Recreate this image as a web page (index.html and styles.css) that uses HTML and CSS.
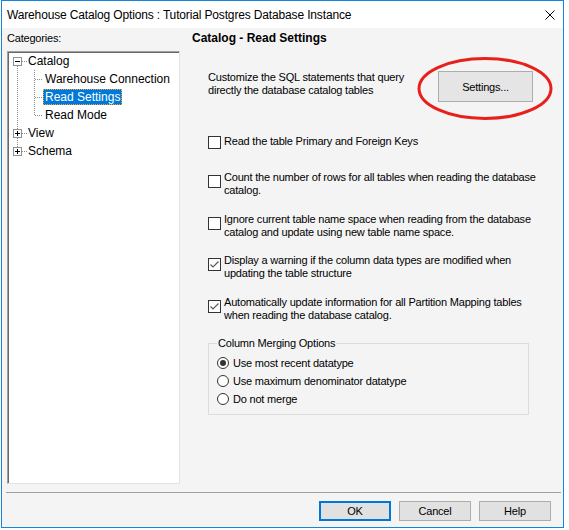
FILE: index.html
```html
<!DOCTYPE html>
<html>
<head>
<meta charset="utf-8">
<link rel="stylesheet" href="styles.css">
</head>
<body>
<div class="window">
  <div class="titlebar">
    <span class="title">Warehouse Catalog Options : Tutorial Postgres Database Instance</span>
    <svg class="close" viewBox="0 0 10 10"><path d="M0.5 0.5 L9.5 9.5 M9.5 0.5 L0.5 9.5" stroke="#000" stroke-width="1" fill="none"/></svg>
  </div>
  <div class="content">
    <div class="main">
      <div class="left">
        <div class="label">Categories:</div>
        <div class="tree">
          <svg class="tree-lines" width="171" height="120">
            <g stroke="#8a8a8a" stroke-width="1" stroke-dasharray="1 1" fill="none">
              <line x1="14" y1="9.5" x2="20" y2="9.5"/>
              <line x1="14" y1="81.5" x2="20" y2="81.5"/>
              <line x1="14" y1="99.5" x2="20" y2="99.5"/>
              <line x1="9.5" y1="14" x2="9.5" y2="77"/>
              <line x1="9.5" y1="86" x2="9.5" y2="95"/>
              <line x1="26.5" y1="18" x2="26.5" y2="64"/>
              <line x1="27" y1="27.5" x2="35" y2="27.5"/>
              <line x1="27" y1="45.5" x2="35" y2="45.5"/>
              <line x1="27" y1="63.5" x2="35" y2="63.5"/>
            </g>
            <g fill="#fff" stroke="#919191">
              <rect x="5.5" y="5.5" width="8" height="8"/>
              <rect x="5.5" y="77.5" width="8" height="8"/>
              <rect x="5.5" y="95.5" width="8" height="8"/>
            </g>
            <g stroke="#000" stroke-width="1">
              <line x1="7" y1="9.5" x2="12" y2="9.5"/>
              <line x1="7" y1="81.5" x2="12" y2="81.5"/>
              <line x1="9.5" y1="79" x2="9.5" y2="84"/>
              <line x1="7" y1="99.5" x2="12" y2="99.5"/>
              <line x1="9.5" y1="97" x2="9.5" y2="102"/>
            </g>
          </svg>
          <div class="node root">Catalog</div>
          <div class="node child">Warehouse Connection</div>
          <div class="node child sel"><span class="selected">Read Settings</span></div>
          <div class="node child">Read Mode</div>
          <div class="node root">View</div>
          <div class="node root">Schema</div>
        </div>
      </div>
      <div class="right">
        <div class="heading">Catalog - Read Settings</div>
        <div class="sql-row">
          <div class="sql-text">Customize the SQL statements that query<br>directly the database catalog tables</div>
          <div class="settings-wrap">
            <button class="btn settings">Settings...</button>
            <svg class="ring" width="139" height="66" viewBox="0 0 139 66"><ellipse cx="69" cy="32.5" rx="66" ry="30" fill="none" stroke="#e8201c" stroke-width="3"/></svg>
          </div>
        </div>
        <div class="checks">
          <div class="cb one">
            <svg class="box" viewBox="0 0 13 13"><rect x="0.5" y="0.5" width="12" height="12" fill="#fff" stroke="#333"/></svg>
            <span>Read the table Primary and Foreign Keys</span>
          </div>
          <div class="cb two second">
            <svg class="box" viewBox="0 0 13 13"><rect x="0.5" y="0.5" width="12" height="12" fill="#fff" stroke="#333"/></svg>
            <span>Count the number of rows for all tables when reading the database<br>catalog.</span>
          </div>
          <div class="cb two">
            <svg class="box" viewBox="0 0 13 13"><rect x="0.5" y="0.5" width="12" height="12" fill="#fff" stroke="#333"/></svg>
            <span>Ignore current table name space when reading from the database<br>catalog and update using new table name space.</span>
          </div>
          <div class="cb two">
            <svg class="box" viewBox="0 0 13 13"><rect x="0.5" y="0.5" width="12" height="12" fill="#fff" stroke="#333"/><path d="M2.5 6.5 L5 9 L10.5 3.5" fill="none" stroke="#5a5a5a" stroke-width="1.2"/></svg>
            <span>Display a warning if the column data types are modified when<br>updating the table structure</span>
          </div>
          <div class="cb two">
            <svg class="box" viewBox="0 0 13 13"><rect x="0.5" y="0.5" width="12" height="12" fill="#fff" stroke="#333"/><path d="M2.5 6.5 L5 9 L10.5 3.5" fill="none" stroke="#5a5a5a" stroke-width="1.2"/></svg>
            <span>Automatically update information for all Partition Mapping tables<br>when reading the database catalog.</span>
          </div>
        </div>
        <fieldset class="group">
          <legend>Column Merging Options</legend>
          <div class="radio">
            <svg class="dot" viewBox="0 0 12 12"><circle cx="6" cy="6" r="5.5" fill="#fff" stroke="#333"/><circle cx="6" cy="6" r="3" fill="#333"/></svg>
            <span>Use most recent datatype</span>
          </div>
          <div class="radio">
            <svg class="dot" viewBox="0 0 12 12"><circle cx="6" cy="6" r="5.5" fill="#fff" stroke="#333"/></svg>
            <span>Use maximum denominator datatype</span>
          </div>
          <div class="radio">
            <svg class="dot" viewBox="0 0 12 12"><circle cx="6" cy="6" r="5.5" fill="#fff" stroke="#333"/></svg>
            <span>Do not merge</span>
          </div>
        </fieldset>
      </div>
    </div>
    <div class="separator"></div>
    <div class="footer">
      <button class="btn default">OK</button>
      <button class="btn">Cancel</button>
      <button class="btn">Help</button>
    </div>
  </div>
</div>
</body>
</html>
```

FILE: styles.css
```css
body {
  margin: 0;
  background: #fff;
  font-family: "Liberation Sans", Arial, sans-serif;
  font-size: 11px;
  color: #000;
}

.window {
  margin-left: 1px;
  width: 563px;
  height: 528px;
  box-sizing: border-box;
  border: 1px solid #1883d7;
  display: flex;
  flex-direction: column;
}

.titlebar {
  height: 27px;
  flex: none;
  background: #fff;
  display: flex;
  align-items: center;
  padding-left: 5px;
}

.title {
  font-size: 12px;
  letter-spacing: -0.15px;
}

.close {
  margin-left: auto;
  margin-right: 8px;
  width: 10px;
  height: 10px;
}

.content {
  flex: 1;
  background: #f4f4f4;
  display: flex;
  flex-direction: column;
}

.main {
  flex: none;
  display: flex;
  height: 464px;
  box-sizing: border-box;
  padding: 4px 0 0 5px;
}

.left {
  width: 173px;
  flex: none;
}

.label {
  line-height: 13px;
  letter-spacing: -0.2px;
}

.tree {
  position: relative;
  margin-top: 6px;
  height: 433px;
  box-sizing: border-box;
  background: #fff;
  border: 1px solid;
  border-color: #a0a0a0 #e3e3e3 #e3e3e3 #a0a0a0;
  box-shadow: inset 1px 1px 0 #696969;
  font-size: 12px;
}

.tree-lines {
  position: absolute;
  left: 0;
  top: 0;
}

.node {
  position: relative;
  height: 18px;
  display: flex;
  align-items: center;
  white-space: nowrap;
}

.node.root {
  padding-left: 20px;
}

.node.child {
  padding-left: 37px;
}

.node.child.sel {
  padding-left: 35px;
}

.selected {
  height: 16px;
  line-height: 14px;
  box-sizing: border-box;
  padding: 0 1px;
  background: #0078d7;
  color: #fff;
  border: 1px dotted #f5a43c;
}

.right {
  margin-left: 12px;
  flex: 1;
  letter-spacing: -0.2px;
}

.heading {
  font-weight: bold;
  font-size: 12px;
  line-height: 13px;
  letter-spacing: 0;
}

.sql-row {
  display: flex;
  margin-top: 26px;
  padding-left: 16px;
}

.sql-text {
  width: 230px;
  line-height: 13px;
}

.settings-wrap {
  position: relative;
}

.btn {
  font-family: inherit;
  font-size: 11px;
  letter-spacing: -0.2px;
  color: #000;
  background: #e1e1e1;
  border: 1px solid #adadad;
  box-sizing: border-box;
  width: 72px;
  height: 20px;
  padding: 0;
  margin: 0;
}

.btn.settings {
  width: 95px;
  height: 31px;
  background: #e5e5e5;
}

.btn.default {
  border: 2px solid #0078d7;
}

.ring {
  position: absolute;
  left: -22px;
  top: -15px;
  pointer-events: none;
}

.checks {
  padding-left: 16px;
}

.cb {
  display: flex;
  line-height: 13px;
  margin-top: 15.5px;
}

.cb:first-child {
  margin-top: 33px;
}

.cb.second {
  margin-top: 22px;
}

.cb .box {
  width: 13px;
  height: 13px;
  flex: none;
  margin-right: 3px;
}

.cb.one .box {
  margin-top: 1px;
}

.cb.two .box {
  margin-top: 4px;
}

.group {
  margin: 15.5px 0 0 16px;
  width: 321px;
  box-sizing: border-box;
  border: 1px solid #dcdcdc;
  padding: 3.5px 0 6px 8px;
  min-inline-size: 0;
}

.group legend {
  padding: 0 1px;
  line-height: 13px;
}

.radio {
  display: flex;
  align-items: center;
  height: 18px;
}

.radio .dot {
  width: 12px;
  height: 12px;
  flex: none;
  margin-right: 4px;
}

.separator {
  height: 1px;
  background: #a0a0a0;
  margin: 0 2px 0 4px;
  flex: none;
}

.footer {
  display: flex;
  justify-content: flex-end;
  gap: 8px;
  padding: 8px 12px 0 0;
}
```
